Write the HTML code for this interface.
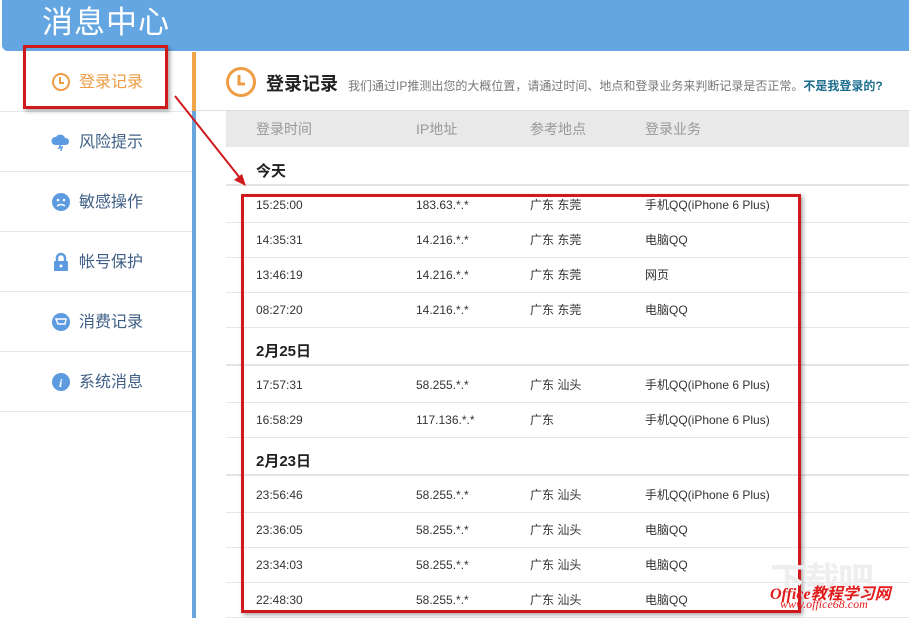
<!DOCTYPE html>
<html><head><meta charset="utf-8"><style>
*{margin:0;padding:0;box-sizing:border-box}
body{width:909px;height:618px;overflow:hidden;background:#fff;font-family:"Liberation Sans","Noto Sans CJK SC",sans-serif;position:relative}
.hdr{position:absolute;left:2px;top:0;width:907px;height:51px;background:#64a6e2;border-bottom-left-radius:6px}
.hdr span{position:absolute;left:40px;top:2px;line-height:42px;color:#fff;font-size:31px;letter-spacing:1px}
.side{position:absolute;left:0;top:52px;width:192px}
.item{height:60px;border-bottom:1px solid #e3e8ee;position:relative;font-size:16px;color:#3f5f86}
.item .t{position:absolute;left:79px;top:0;line-height:62px}
.item svg{position:absolute;left:51px;top:20px}
.vb{position:absolute;left:192px;top:52px;width:4px;height:566px;background:#6aa6de}
.vb2{position:absolute;left:192px;top:52px;width:4px;height:59px;background:#f0a54a}
.abs{position:absolute;white-space:nowrap}
.row{position:absolute;left:226px;width:683px;height:35px;border-bottom:1px solid #e6e6e6;font-size:12px;color:#333}
.row span{position:absolute;top:0;line-height:35px;height:35px}
.c1{left:30px}.c2{left:190px}.c3{left:304px}.c4{left:419px}
.day{position:absolute;left:226px;width:683px;height:22px;border-bottom:2px solid #e4e4e4;font-size:15px;font-weight:bold;color:#222}
.day span{position:absolute;left:30px;top:-2px;line-height:20px}
.redbox{position:absolute;border:3px solid #d0191c;box-shadow:2px 2px 4px rgba(0,0,0,.35)}
</style></head><body>
<div class="hdr"><span>消息中心</span></div>
<div class="side">
<div class="item"><svg width="20" height="20"><circle cx="10" cy="10" r="8" fill="none" stroke="#ee9c45" stroke-width="2"/><path d="M9 5v6h4" fill="none" stroke="#ee9c45" stroke-width="2"/></svg><span class="t" style="color:#ee9c45">登录记录</span></div>
<div class="item"><svg width="20" height="20"><path d="M4 13a4 4 0 0 1 1-8 5 5 0 0 1 9 1 3.5 3.5 0 0 1 1 7z" fill="#5d9be0"/><path d="M10 12l-2 4 3-1-1 4" stroke="#5d9be0" fill="none" stroke-width="1.5"/></svg><span class="t">风险提示</span></div>
<div class="item"><svg width="20" height="20"><circle cx="10" cy="10" r="9" fill="#5d9be0"/><circle cx="7" cy="8" r="1.3" fill="#fff"/><circle cx="13" cy="8" r="1.3" fill="#fff"/><path d="M6 14q4-3 8 0" stroke="#fff" fill="none" stroke-width="1.5"/></svg><span class="t">敏感操作</span></div>
<div class="item"><svg width="20" height="20"><path d="M6 9V6a4 4 0 0 1 8 0v3" stroke="#5d9be0" fill="none" stroke-width="2.5"/><rect x="3" y="9" width="14" height="10" rx="1" fill="#5d9be0"/><circle cx="10" cy="14" r="1.5" fill="#fff"/></svg><span class="t">帐号保护</span></div>
<div class="item"><svg width="20" height="20"><circle cx="10" cy="10" r="9" fill="#5d9be0"/><path d="M5 7h10l-1 5H7zM8 15h.1M13 15h.1" stroke="#fff" fill="none" stroke-width="1.5"/></svg><span class="t">消费记录</span></div>
<div class="item"><svg width="20" height="20"><circle cx="10" cy="10" r="9" fill="#5d9be0"/><text x="8" y="15" fill="#fff" font-size="12" font-style="italic" font-weight="bold" font-family="Liberation Serif">i</text></svg><span class="t">系统消息</span></div>
</div>
<div class="vb"></div><div class="vb2"></div>
<svg class="abs" style="left:225px;top:66px" width="32" height="32"><circle cx="16" cy="16" r="13.5" fill="none" stroke="#ee9c45" stroke-width="3"/><path d="M14 9v9h6" fill="none" stroke="#ee9c45" stroke-width="3"/></svg>
<div class="abs" style="left:266px;top:70px;font-size:18px;font-weight:bold;color:#222">登录记录</div>
<div class="abs" style="left:348px;top:77px;font-size:12px;color:#777">我们通过IP推测出您的大概位置，请通过时间、地点和登录业务来判断记录是否正常。<b style="color:#1b6e8e">不是我登录的?</b></div>
<div class="abs" style="left:196px;top:110px;width:713px;height:1px;background:#ddd"></div>
<div class="abs" style="left:226px;top:111px;width:683px;height:36px;background:#e9e9e9;font-size:14px;color:#999">
<span class="abs" style="left:30px;top:8px">登录时间</span><span class="abs" style="left:190px;top:8px">IP地址</span><span class="abs" style="left:304px;top:8px">参考地点</span><span class="abs" style="left:419px;top:8px">登录业务</span></div>
<div class="day" style="top:164px"><span>今天</span></div>
<div class="row" style="top:188px"><span class="c1">15:25:00</span><span class="c2">183.63.*.*</span><span class="c3">广东 东莞</span><span class="c4">手机QQ(iPhone 6 Plus)</span></div>
<div class="row" style="top:223px"><span class="c1">14:35:31</span><span class="c2">14.216.*.*</span><span class="c3">广东 东莞</span><span class="c4">电脑QQ</span></div>
<div class="row" style="top:258px"><span class="c1">13:46:19</span><span class="c2">14.216.*.*</span><span class="c3">广东 东莞</span><span class="c4">网页</span></div>
<div class="row" style="top:293px"><span class="c1">08:27:20</span><span class="c2">14.216.*.*</span><span class="c3">广东 东莞</span><span class="c4">电脑QQ</span></div>
<div class="day" style="top:344px"><span>2月25日</span></div>
<div class="row" style="top:368px"><span class="c1">17:57:31</span><span class="c2">58.255.*.*</span><span class="c3">广东 汕头</span><span class="c4">手机QQ(iPhone 6 Plus)</span></div>
<div class="row" style="top:403px"><span class="c1">16:58:29</span><span class="c2">117.136.*.*</span><span class="c3">广东</span><span class="c4">手机QQ(iPhone 6 Plus)</span></div>
<div class="day" style="top:454px"><span>2月23日</span></div>
<div class="row" style="top:478px"><span class="c1">23:56:46</span><span class="c2">58.255.*.*</span><span class="c3">广东 汕头</span><span class="c4">手机QQ(iPhone 6 Plus)</span></div>
<div class="row" style="top:513px"><span class="c1">23:36:05</span><span class="c2">58.255.*.*</span><span class="c3">广东 汕头</span><span class="c4">电脑QQ</span></div>
<div class="row" style="top:548px"><span class="c1">23:34:03</span><span class="c2">58.255.*.*</span><span class="c3">广东 汕头</span><span class="c4">电脑QQ</span></div>
<div class="row" style="top:583px"><span class="c1">22:48:30</span><span class="c2">58.255.*.*</span><span class="c3">广东 汕头</span><span class="c4">电脑QQ</span></div>
<div class="redbox" style="left:23px;top:45px;width:145px;height:64px"></div>
<div class="redbox" style="left:241px;top:194px;width:560px;height:419px"></div>
<svg class="abs" style="left:0;top:0" width="909" height="618"><path d="M175 96L240 178" stroke="#d0191c" stroke-width="2"/><path d="M246 186l-12-6 8-6z" fill="#d0191c"/></svg>
<div class="abs" style="left:770px;top:552px;font-size:36px;font-weight:bold;color:#eee;letter-spacing:-2px">下载吧</div>
<div class="abs" style="left:770px;top:580px;font-size:16px;font-weight:bold;font-style:italic;color:#e31b1b;font-family:'Liberation Serif','Noto Sans CJK SC',serif">Office教程学习网</div>
<div class="abs" style="left:780px;top:597px;font-size:12px;font-style:italic;color:#e31b1b;font-family:'Liberation Serif',serif">www.office68.com</div>
</body></html>
